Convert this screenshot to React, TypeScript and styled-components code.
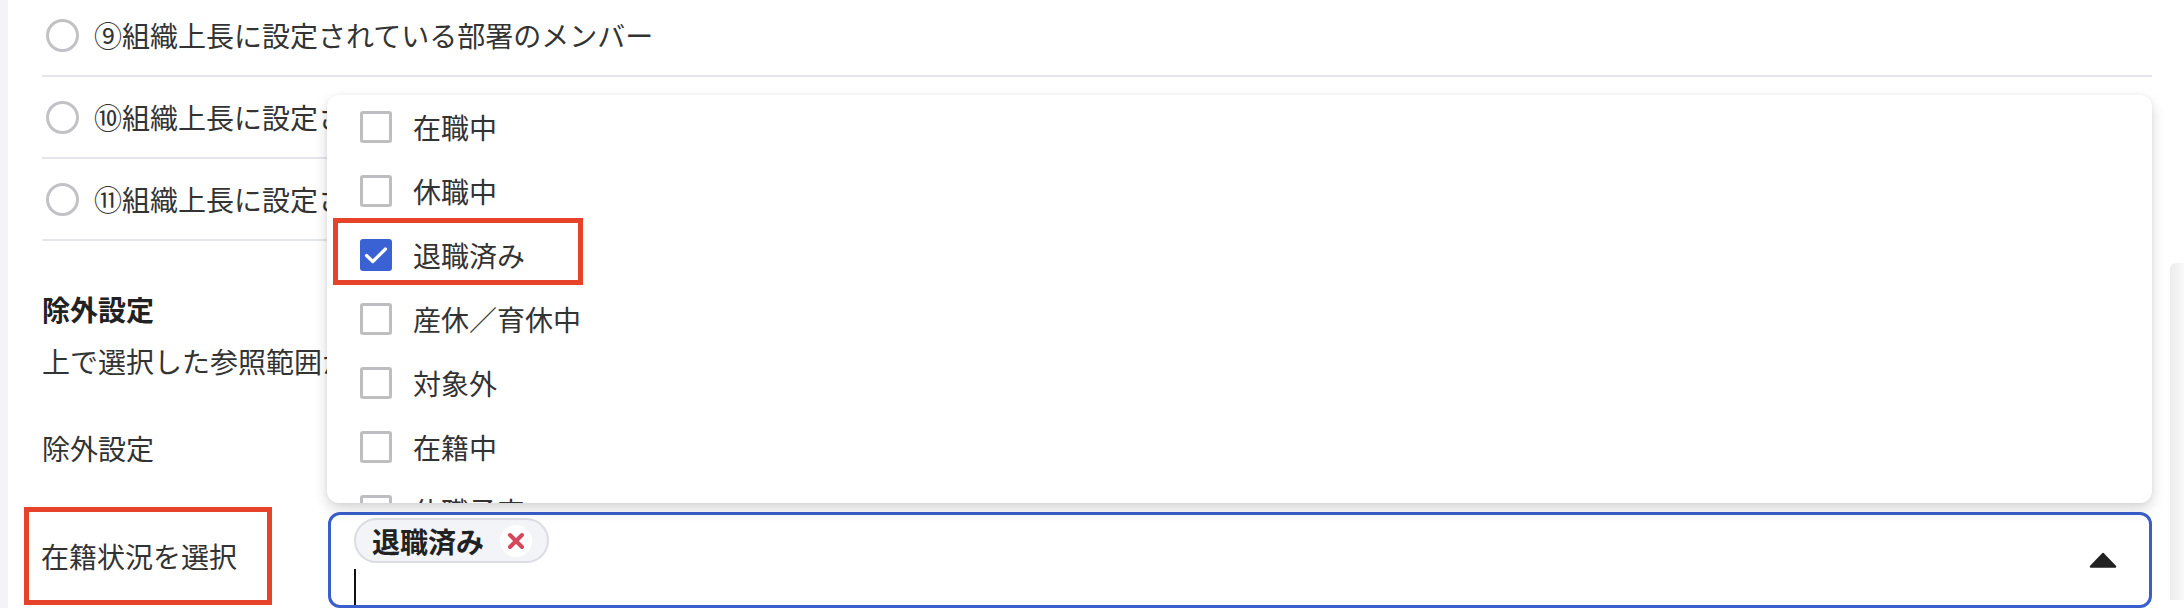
import styled, { createGlobalStyle } from 'styled-components';

const GlobalStyle = createGlobalStyle`
  html, body {
    margin: 0;
    padding: 0;
    background: #fff;
  }
  body {
    font-family: "Noto Sans CJK JP", "Noto Sans", sans-serif;
    color: #333;
  }
`;

const Page = styled.div`
  display: flex;
  width: 2184px;
  height: 608px;
  overflow: hidden;
  background: #fff;
`;

const SideRail = styled.div`
  width: 8px;
  flex-shrink: 0;
  background: #f3f3f8;
`;

const Main = styled.div`
  flex: 1;
  min-width: 0;
  padding: 0 18px 0 34px;
`;

const RightEdge = styled.div`
  width: 14px;
  flex-shrink: 0;
  padding-top: 263px;
  box-sizing: border-box;
`;

const EdgeShade = styled.div`
  height: 337px;
  border-top-left-radius: 6px;
  background: linear-gradient(to right, #ececec, #f9f9f9);
`;

const RadioList = styled.div`
  margin-top: -5px;
`;

const RadioRow = styled.div`
  display: flex;
  align-items: center;
  gap: 15px;
  height: 80px;
  padding-left: 4px;
  border-bottom: 2px solid #e5e5ec;
`;

const RadioCircle = styled.span`
  width: 33px;
  height: 33px;
  box-sizing: border-box;
  flex-shrink: 0;
  border: 3px solid #c2c2c6;
  border-radius: 50%;
`;

const RadioLabel = styled.span`
  font-size: 28px;
  line-height: 40px;
  color: #333;
  white-space: nowrap;
`;

const Section = styled.section`
  padding-top: 48px;
`;

const SectionTitle = styled.h3`
  margin: 0;
  font-size: 28px;
  line-height: 40px;
  font-weight: 700;
  color: #222;
`;

const Description = styled.p`
  margin: 12px 0 0;
  font-size: 28px;
  line-height: 40px;
  color: #333;
  white-space: nowrap;
`;

const FormRow = styled.div<{ $gap: number }>`
  display: flex;
  align-items: flex-start;
  margin-top: ${({ $gap }) => $gap}px;
`;

const FieldLabel = styled.div<{ $marked?: boolean }>`
  flex-shrink: 0;
  box-sizing: border-box;
  font-size: 28px;
  line-height: 40px;
  color: #333;
  width: ${({ $marked }) => ($marked ? '248px' : '286px')};
  ${({ $marked }) =>
    $marked &&
    `
    display: flex;
    align-items: center;
    height: 98px;
    margin-left: -18px;
    margin-right: 56px;
    padding-left: 12px;
    border: 5px solid #e6432a;
  `}
`;

const SelectWrap = styled.div`
  flex: 1;
  position: relative;
  margin-top: 5px;
`;

const SelectBox = styled.div`
  display: flex;
  height: 96px;
  box-sizing: border-box;
  border: 3px solid #3a5fcd;
  border-radius: 12px;
  background: #fff;
`;

const ValueArea = styled.div`
  flex: 1;
  display: flex;
  flex-direction: column;
  align-items: flex-start;
  padding: 3px 0 0 23px;
`;

const Chip = styled.span`
  display: inline-flex;
  align-items: center;
  gap: 16px;
  height: 50px;
  box-sizing: border-box;
  padding: 0 15px 0 16px;
  border: 2px solid #dcdde3;
  border-radius: 25px;
  background: #f3f4f8;
  font-size: 28px;
  font-weight: 700;
  color: #222;
`;

const ChipRemove = styled.span`
  display: flex;
  align-items: center;
  justify-content: center;
  width: 32px;
  height: 32px;
  border-radius: 50%;
  background: #fff;
`;

const Caret = styled.span`
  width: 2px;
  height: 40px;
  margin-top: 6px;
  background: #111;
`;

const ArrowArea = styled.div`
  display: flex;
  align-items: center;
  padding-right: 32px;
`;

const Popup = styled.div`
  position: absolute;
  left: -1px;
  right: 0;
  bottom: calc(100% + 9px);
  height: 408px;
  overflow: hidden;
  background: #fff;
  border-radius: 12px;
  box-shadow: 0 6px 14px rgba(0, 0, 0, 0.16), 0 0 4px rgba(0, 0, 0, 0.05);
  z-index: 10;
`;

const OptionRow = styled.div`
  position: relative;
  display: flex;
  align-items: center;
  gap: 21px;
  height: 64px;
  padding-left: 33px;
  font-size: 28px;
  color: #333;
`;

const Checkbox = styled.span<{ $checked?: boolean }>`
  position: relative;
  display: flex;
  align-items: center;
  justify-content: center;
  width: 32px;
  height: 32px;
  flex-shrink: 0;
  box-sizing: border-box;
  border-radius: 3px;
  border: 3px solid ${({ $checked }) => ($checked ? '#3a62d4' : '#bdbdc2')};
  background: ${({ $checked }) => ($checked ? '#3a62d4' : '#fff')};
`;

const Highlight = styled.span`
  position: absolute;
  left: 6px;
  top: -5px;
  width: 250px;
  height: 67px;
  box-sizing: border-box;
  border: 5px solid #e6432a;
  pointer-events: none;
`;

const radios = [
  '⑨組織上長に設定されている部署のメンバー',
  '⑩組織上長に設定されている部署と配下の部署のメンバー',
  '⑪組織上長に設定されている部署と配下の部署のメンバー（兼務含む）',
];

const options = [
  { label: '在職中' },
  { label: '休職中' },
  { label: '退職済み', checked: true, marked: true },
  { label: '産休／育休中' },
  { label: '対象外' },
  { label: '在籍中' },
  { label: '休職予定' },
];

function CheckMark() {
  return (
    <svg width="26" height="26" viewBox="0 0 26 26" fill="none">
      <path d="M3.5 13.5l6.3 6L22.5 7" stroke="#fff" strokeWidth="3.2" strokeLinecap="round" strokeLinejoin="round" />
    </svg>
  );
}

function RemoveIcon() {
  return (
    <svg width="18" height="18" viewBox="0 0 18 18" fill="none">
      <path d="M3 3l12 12M15 3L3 15" stroke="#d5475d" strokeWidth="4" strokeLinecap="round" />
    </svg>
  );
}

function UpArrow() {
  return (
    <svg width="28" height="17" viewBox="0 0 28 17">
      <path d="M14 2L26 14.5H2Z" fill="#222" stroke="#222" strokeWidth="2.5" strokeLinejoin="round" />
    </svg>
  );
}

export default function App() {
  return (
    <>
      <GlobalStyle />
      <Page>
        <SideRail />
        <Main>
          <RadioList>
            {radios.map((text) => (
              <RadioRow key={text}>
                <RadioCircle />
                <RadioLabel>{text}</RadioLabel>
              </RadioRow>
            ))}
          </RadioList>

          <Section>
            <SectionTitle>除外設定</SectionTitle>
            <Description>上で選択した参照範囲から、以下の条件に該当するメンバーを除外します。</Description>

            <FormRow $gap={47}>
              <FieldLabel>除外設定</FieldLabel>
            </FormRow>

            <FormRow $gap={39}>
              <FieldLabel $marked>在籍状況を選択</FieldLabel>
              <SelectWrap>
                <Popup>
                  {options.map((opt) => (
                    <OptionRow key={opt.label}>
                      <Checkbox $checked={opt.checked}>{opt.checked && <CheckMark />}</Checkbox>
                      <span>{opt.label}</span>
                      {opt.marked && <Highlight />}
                    </OptionRow>
                  ))}
                </Popup>
                <SelectBox>
                  <ValueArea>
                    <Chip>
                      退職済み
                      <ChipRemove>
                        <RemoveIcon />
                      </ChipRemove>
                    </Chip>
                    <Caret />
                  </ValueArea>
                  <ArrowArea>
                    <UpArrow />
                  </ArrowArea>
                </SelectBox>
              </SelectWrap>
            </FormRow>
          </Section>
        </Main>
        <RightEdge>
          <EdgeShade />
        </RightEdge>
      </Page>
    </>
  );
}
